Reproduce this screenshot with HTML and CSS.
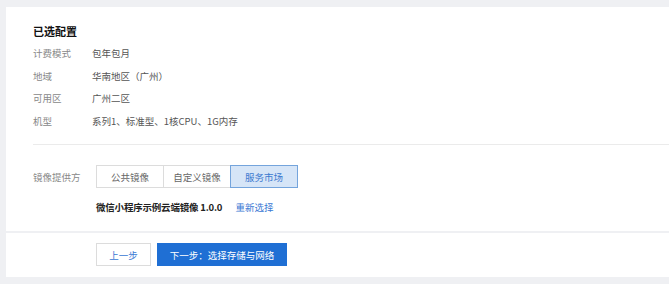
FILE: index.html
```html
<!DOCTYPE html>
<html>
<head>
  <meta charset="utf-8">
  <title>已选配置</title>
  <link rel="stylesheet" href="styles.css">
</head>
<body>
  <div class="panel">
    <section class="summary">
      <h2 class="title">已选配置</h2>
      <div class="row"><span class="label">计费模式</span><span class="value">包年包月</span></div>
      <div class="row"><span class="label">地域</span><span class="value">华南地区（广州）</span></div>
      <div class="row"><span class="label">可用区</span><span class="value">广州二区</span></div>
      <div class="row"><span class="label">机型</span><span class="value">系列1、标准型、1核CPU、1G内存</span></div>
    </section>
    <section class="image">
      <div class="provider">
        <span class="label wide">镜像提供方</span>
        <div class="tabs">
          <button class="tab">公共镜像</button>
          <button class="tab">自定义镜像</button>
          <button class="tab active">服务市场</button>
        </div>
      </div>
      <div class="chosen">
        <b>微信小程序示例云端镜像 1.0.0</b>
        <a href="#">重新选择</a>
      </div>
    </section>
  </div>
  <div class="panel actions">
    <button class="btn">上一步</button>
    <button class="btn primary">下一步：选择存储与网络</button>
  </div>
</body>
</html>
```

FILE: styles.css
```css
*, *:before, *:after {
  box-sizing: border-box;
}
body {
  margin: 0;
  padding: 7px 0 7px 6px;
  background: #eff0f3;
  font-family: "Noto Sans CJK SC", "Liberation Sans", sans-serif;
  font-size: 9.5px;
  color: #333;
}
.panel {
  background: #fff;
}
.summary {
  padding: 16px 0 0 27px;
}
.title {
  margin: 0 0 3px;
  font-size: 11px;
  line-height: 16px;
  font-weight: bold;
  color: #111;
}
.row {
  display: flex;
  height: 22.5px;
  align-items: center;
}
.label {
  width: 59px;
  color: #888;
}
.label.wide {
  width: 63px;
}
.value {
  color: #555;
}
.image {
  margin: 12px 0 0 27px;
  border-top: 1px solid #ebebeb;
  padding: 20px 0 16px;
}
.provider {
  display: flex;
  align-items: center;
}
.tabs {
  display: flex;
}
.tab {
  width: 68px;
  height: 23px;
  padding: 0;
  margin-left: -1px;
  border: 1px solid #dcdcdc;
  background: #fff;
  font: inherit;
  color: #666;
}
.tab:first-child {
  margin-left: 0;
}
.tab.active {
  position: relative;
  background: #d6e5f7;
  border-color: #74a4dc;
  color: #3c79cf;
}
.chosen {
  margin: 11px 0 0 63px;
  line-height: 16px;
}
.chosen b {
  color: #222;
  letter-spacing: -0.2px;
}
.chosen a {
  margin-left: 11px;
  color: #3a78d4;
  text-decoration: none;
}
.actions {
  margin-top: 2px;
  display: flex;
  gap: 6px;
  padding: 10px 0 11px 90px;
}
.btn {
  height: 23px;
  width: 55px;
  padding: 0;
  border: 1px solid #dcdcdc;
  background: #fff;
  font: inherit;
  color: #3a78d4;
}
.btn.primary {
  width: 130px;
  background: #1f6fd4;
  border-color: #1f6fd4;
  color: #fff;
}
```
